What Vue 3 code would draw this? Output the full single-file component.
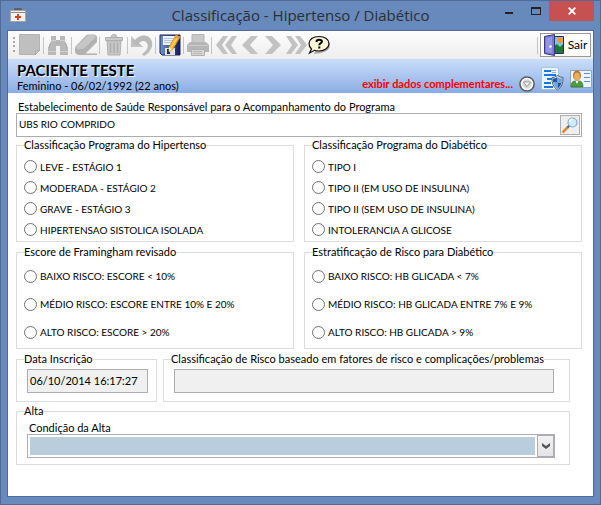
<script setup>
import { ref } from 'vue'

const groups = [
  {
    id: 'hipertenso',
    title: 'Classificação Programa do Hipertenso',
    options: ['LEVE - ESTÁGIO 1', 'MODERADA - ESTÁGIO 2', 'GRAVE - ESTÁGIO 3', 'HIPERTENSAO SISTOLICA ISOLADA'],
  },
  {
    id: 'diabetico',
    title: 'Classificação Programa do Diabético',
    options: ['TIPO I', 'TIPO II (EM USO DE INSULINA)', 'TIPO II (SEM USO DE INSULINA)', 'INTOLERANCIA A GLICOSE'],
  },
  {
    id: 'framingham',
    title: 'Escore de Framingham revisado',
    roomy: true,
    options: ['BAIXO RISCO: ESCORE < 10%', 'MÉDIO RISCO: ESCORE ENTRE 10% E 20%', 'ALTO RISCO: ESCORE > 20%'],
  },
  {
    id: 'estratificacao',
    title: 'Estratificação de Risco para Diabético',
    roomy: true,
    options: ['BAIXO RISCO: HB GLICADA < 7%', 'MÉDIO RISCO: HB GLICADA ENTRE 7% E 9%', 'ALTO RISCO: HB GLICADA > 9%'],
  },
]

const selected = ref({})
const estabelecimento = ref('UBS RIO COMPRIDO')
const dataInscricao = ref('06/10/2014 16:17:27')
const classificacaoRisco = ref('')
const condicaoAlta = ref('')
</script>

<template>
  <div class="window">
    <header class="titlebar">
      <svg class="app-icon" viewBox="0 0 16 14" width="16" height="14" aria-hidden="true">
        <path d="M5 3V1h6v2" fill="none" stroke="#555" stroke-width="1.4" />
        <rect x="0.5" y="2.5" width="15" height="11" fill="#f4f2ef" stroke="#a8a39d" />
        <path d="M1 4.5h14" stroke="#8d8b89" />
        <path d="M8 6v6M5 9h6" stroke="#d8431f" stroke-width="2" />
      </svg>
      <h1 class="title">Classificação - Hipertenso / Diabético</h1>
      <div class="controls">
        <button class="win-btn" type="button" aria-label="Minimizar">
          <svg viewBox="0 0 8 12" width="8" height="12"><path d="M0 7h8v2H0z" fill="#222" /></svg>
        </button>
        <button class="win-btn" type="button" aria-label="Maximizar">
          <svg viewBox="0 0 10 8" width="10" height="8"><path d="M0 0h10v8H0zM1 2v5h8V2z" fill="#222" fill-rule="evenodd" /></svg>
        </button>
        <button class="win-btn close" type="button" aria-label="Fechar">
          <svg viewBox="0 0 8 8" width="8" height="8"><path d="M0.7 0.7l6.6 6.6M7.3 0.7L0.7 7.3" stroke="#fff" stroke-width="1.8" /></svg>
        </button>
      </div>
    </header>

    <main class="client">
      <nav class="toolbar">
        <svg class="grip" viewBox="0 0 2 16" width="2" height="16" aria-hidden="true">
          <path d="M0 1h2M0 5h2M0 9h2M0 14h2" stroke="#a9a9a9" stroke-width="2" />
        </svg>
        <button class="tool" type="button" aria-label="Novo">
          <svg viewBox="0 0 22 22" width="22" height="22">
            <path d="M0.500 0.500h20v16l-4 4h-16z" fill="#bfbfbf" stroke="#b3b3b3" />
            <path d="M16.500 20.500v-3.500l4-.5z" fill="#d6d6d6" stroke="#aaa" />
          </svg>
        </button>
        <span class="sep"></span>
        <button class="tool" type="button" aria-label="Pesquisar">
          <svg viewBox="0 0 22 22" width="22" height="22">
            <path d="M4 2h5v4h4V2h5v5l3 7v7h-8v-9h-4v9H1v-7l3-7z" fill="#b9b9b9" />
            <path d="M4 6.500h5M13 6.500h5M1 17.500h8M13 17.500h8" stroke="#cfcfcf" />
            <path d="M3.500 9L2 14M18.500 9l1.500 5M9 9h4" stroke="#a6a6a6" />
          </svg>
        </button>
        <span class="sep"></span>
        <button class="tool" type="button" aria-label="Limpar">
          <svg viewBox="0 0 22 22" width="22" height="22">
            <path d="M0 14q0-1 1-2L11 1.500q1-1 3-1h5q3 .5 3 3V8L10.500 19.500H22V21H4q-4-.5-4-4z" fill="#b1b1b1" />
            <path d="M1 13L12 2q1-1 3-1h4q3 1 1 3L9.500 14q-1 1-3 1H3q-2 0-2-2z" fill="#c6c6c6" />
          </svg>
        </button>
        <span class="sep"></span>
        <button class="tool" type="button" aria-label="Excluir">
          <svg viewBox="0 0 22 22" width="22" height="22">
            <path d="M2.500 3.500h17v3h-17zM8 3.500q0-3 3-3t3 3" fill="#cbcbcb" stroke="#b0b0b0" />
            <path d="M4 7h14l-1 14H5z" fill="#c8c8c8" stroke="#b0b0b0" />
            <path d="M7.500 9v10M11 9v10M14.500 9v10" stroke="#adadad" stroke-width="1.500" />
          </svg>
        </button>
        <span class="sep"></span>
        <button class="tool" type="button" aria-label="Desfazer">
          <svg viewBox="0 0 22 22" width="22" height="22">
            <path d="M0 2l4 4c4-5 11-6 15-2 5 6 1 14-6 18l-2-2c5-3 8-8 4-12-2-2-5-1-7 1l4 4H0z" fill="#bababa" />
            <path d="M1 3v9h10" fill="none" stroke="#cdcdcd" />
          </svg>
        </button>
        <span class="sep"></span>
        <button class="tool" type="button" aria-label="Salvar">
          <svg viewBox="0 0 22 22" width="22" height="22">
            <defs>
              <linearGradient id="disk" x1="0" x2="1"><stop offset="0" stop-color="#6f94cf" /><stop offset="1" stop-color="#141b57" /></linearGradient>
            </defs>
            <path d="M1 1h20v20H3l-2-2z" fill="url(#disk)" stroke="#1a2458" />
            <path d="M4 2h13v9H4z" fill="#eef3fb" />
            <path d="M5 4.500h11M5 6.500h11M5 8.500h11" stroke="#b6c5dd" />
            <path d="M6 14h10v7H6z" fill="#dfe4ea" />
            <path d="M8 15h3v5H8z" fill="#1b2868" />
            <path d="M17 1l4 2-7 12-4 3 0-5z" fill="#f6b92c" stroke="#d88413" stroke-width="0.700" />
            <path d="M17 1l4 2-1.500 2.500-3.500-2z" fill="#ef9848" />
            <path d="M10 13l3 2-3 3z" fill="#f4ead0" />
            <path d="M18 4.500l-6 9" stroke="#ffe47a" />
          </svg>
        </button>
        <span class="sep"></span>
        <button class="tool" type="button" aria-label="Imprimir">
          <svg viewBox="0 0 22 22" width="22" height="22">
            <path d="M5 0.500h12v8H5z" fill="#c9c9c9" stroke="#b5b5b5" />
            <path d="M3 8h16l3 3v7H0v-7z" fill="#b6b6b6" />
            <path d="M1 11.500h20" stroke="#cbcbcb" />
            <path d="M4.500 15.500h13v6h-13z" fill="#d6d6d6" stroke="#b0b0b0" />
            <path d="M6 17.500h9M6 19.500h9" stroke="#b8b8b8" />
          </svg>
        </button>
        <span class="sep"></span>
        <div class="pager">
          <button class="tool narrow" type="button" aria-label="Primeiro">
            <svg viewBox="0 0 22 18" width="22" height="18"><path d="M7 0h5L6 9l6 9H7L0 9zM16 0h5l-6 9 6 9h-5L9 9z" fill="#c2c2c2" /></svg>
          </button>
          <button class="tool narrow" type="button" aria-label="Anterior">
            <svg viewBox="0 0 16 18" width="16" height="18"><path d="M9 0h7L8 9l8 9H9L0 9z" fill="#c2c2c2" /></svg>
          </button>
          <button class="tool narrow" type="button" aria-label="Próximo">
            <svg viewBox="0 0 16 18" width="16" height="18"><path d="M0 0h7l9 9-9 9H0l8-9z" fill="#c2c2c2" /></svg>
          </button>
          <button class="tool narrow" type="button" aria-label="Último">
            <svg viewBox="0 0 22 18" width="22" height="18"><path d="M1 0h5l7 9-7 9H1l6-9zM10 0h5l7 9-7 9h-5l6-9z" fill="#c2c2c2" /></svg>
          </button>
          <button class="tool narrow" type="button" aria-label="Ajuda">
            <svg viewBox="0 0 22 20" width="22" height="20">
              <path d="M13 3q9 1 9 7t-9 8l-7 1z" fill="#aaa" />
              <path d="M11 1.500c6 0 10 3 10 7S17 16 11 16c-1.500 0-3 0-4.500-.7L1.500 18l2-4C2 12.500 1 10.500 1 8.500c0-4 4-7 10-7z" fill="#fff6d3" stroke="#111" stroke-width="1.200" />
              <path d="M8.500 7q0-2.300 2.700-2.300T13.900 6.500q0 1.100-1.500 1.800-1.100.6-1.100 1.900M11.300 11.500v2" fill="none" stroke="#000" stroke-width="2" />
            </svg>
          </button>
        </div>
        <span class="sep push"></span>
        <button class="exit" type="button">
          <svg viewBox="0 0 20 22" width="20" height="22" aria-hidden="true">
            <path d="M9.500 2.500h10v17h-10z" fill="#7cc4f4" stroke="#2a2a66" />
            <circle cx="16" cy="6" r="3" fill="#f59a1c" />
            <path d="M10 12l3-2 3 3 3-3v9h-9z" fill="#1e7a2a" />
            <path d="M0.500 2.500L10.500 0.500v21L0.500 19.500z" fill="#7b7ad2" stroke="#38367e" />
            <path d="M2 4l6-1.500V19l-6-1z" fill="#9594e2" />
            <circle cx="6.500" cy="12.500" r="1.300" fill="#fff" />
          </svg>
          Sair
        </button>
      </nav>

      <section class="patient">
        <div class="who">
          <h2>PACIENTE TESTE</h2>
          <p>Feminino - 06/02/1992 (22 anos)</p>
        </div>
        <a class="more" href="#">exibir dados complementares...</a>
        <button class="plain expand" type="button" aria-label="Expandir">
          <svg viewBox="0 0 16 16" width="16" height="16">
            <circle cx="8" cy="8" r="7" fill="#d8d8d8" stroke="#555" stroke-width="1.600" />
            <circle cx="8" cy="8" r="5.500" fill="none" stroke="#fff" stroke-width="1.500" />
            <path d="M4.500 6h7L8 10.500z" fill="#fff" stroke="#888" stroke-width="0.800" />
          </svg>
        </button>
        <button class="plain" type="button" aria-label="Documento protegido">
          <svg viewBox="0 0 23 24" width="23" height="24">
            <path d="M0.500 0.500h17v22H0.500z" fill="#e9f3fd" stroke="#a9c3e4" />
            <path d="M3 3h7v2H3zM3 7h12v2H3zM6 11h5v2H6zM3 15h7v2H3zM3 19h9v2H3z" fill="#1d74dc" />
            <path d="M10 3.500h5M11 5.500h4" stroke="#7fb2ee" />
            <path d="M16.500 8.500q3 2 5.500 2 .5 8.500-5.500 12.500-6-4-5.500-12.500 2.500 0 5.500-2z" fill="#dfe8f0" stroke="#4f6275" />
            <path d="M16.500 10v5.500h-4.200q-.4-2-.3-4 2.500 0 4.500-1.500zM16.500 15.500h4.200q-1 4-4.200 6.500z" fill="#1659ad" />
            <path d="M16.500 10v5.500h4.200q.4-2 .3-4-2.500 0-4.500-1.500zM16.500 15.500h-4.200q1 4 4.200 6.500z" fill="#6ea4e2" />
          </svg>
        </button>
        <button class="plain" type="button" aria-label="Cartão do paciente">
          <svg viewBox="0 0 22 20" width="22" height="20">
            <path d="M0.500 1.500h21v17H0.500z" fill="#eef5fd" stroke="#8da3c2" />
            <path d="M14 4.500h6M14 8.500h6M14 12.500h6" stroke="#5f8fd0" />
            <path d="M1 18q0-6 4-6h4q4 0 4 6z" fill="#4c9b3d" stroke="#2f7328" stroke-width="0.700" />
            <path d="M5.500 12h3L7 15z" fill="#fff" />
            <ellipse cx="7" cy="6.500" rx="4" ry="5" fill="#b3742a" />
            <ellipse cx="7" cy="7.500" rx="3" ry="4" fill="#e9ac62" />
          </svg>
        </button>
      </section>

      <form class="form" @submit.prevent>
        <label class="caption" for="estabelecimento">Estabelecimento de Saúde Responsável para o Acompanhamento do Programa</label>
        <div class="lookup">
          <input id="estabelecimento" v-model="estabelecimento" type="text" />
          <button class="search" type="button" aria-label="Procurar">
            <svg viewBox="0 0 18 18" width="18" height="18">
              <path d="M1.500 16.500L7 11" stroke="#e2892b" stroke-width="2.500" />
              <path d="M6.500 11.500l2-2" stroke="#55606b" stroke-width="2" />
              <circle cx="11.500" cy="6.500" r="4.500" fill="#c9ebfb" stroke="#86a6c4" stroke-width="1.200" />
              <path d="M8.500 6q.5-2.500 3-3" fill="none" stroke="#fff" stroke-width="1.500" />
            </svg>
          </button>
        </div>

        <div class="groups">
          <fieldset v-for="g in groups" :key="g.id" class="group">
            <legend>{{ g.title }}</legend>
            <div class="options" :class="{ roomy: g.roomy }">
              <label v-for="o in g.options" :key="o" class="option">
                <input v-model="selected[g.id]" type="radio" :name="g.id" :value="o" />
                <span>{{ o }}</span>
              </label>
            </div>
          </fieldset>
        </div>

        <div class="details">
          <fieldset class="group">
            <legend><label for="data">Data Inscrição</label></legend>
            <div class="body short"><input id="data" v-model="dataInscricao" class="field" type="text" readonly /></div>
          </fieldset>
          <fieldset class="group">
            <legend><label for="risco">Classificação de Risco baseado em fatores de risco e complicações/problemas</label></legend>
            <div class="body"><input id="risco" v-model="classificacaoRisco" class="field" type="text" readonly /></div>
          </fieldset>
          <fieldset class="group wide">
            <legend>Alta</legend>
            <div class="body alta">
              <label class="sub" for="alta">Condição da Alta</label>
              <div class="combo">
                <select id="alta" v-model="condicaoAlta"><option value=""></option></select>
                <span class="arrow" aria-hidden="true">
                  <svg viewBox="0 0 8 6" width="8" height="6"><path d="M0 0l4 3 4-3v3L4 6 0 3z" fill="#555" /></svg>
                </span>
              </div>
            </div>
          </fieldset>
        </div>
      </form>
    </main>
  </div>
</template>

<style>
body {
  margin: 0;
}
</style>

<style scoped>
* {
  box-sizing: border-box;
}

.window {
  display: flex;
  flex-direction: column;
  min-height: 100vh;
  padding: 0 6px 7px;
  border: 1px solid #4f6b96;
  background: #6789bb;
  color: #000;
  font: 11px/14px Lato, "Liberation Sans", sans-serif;
}

input,
select,
button {
  margin: 0;
  font: inherit;
  color: inherit;
}

button {
  display: flex;
  align-items: center;
  justify-content: center;
  padding: 0;
  border: 0;
  background: none;
}

svg {
  display: block;
  flex: none;
}

.titlebar {
  display: grid;
  grid-template-columns: 1fr auto 1fr;
  height: 29px;
}

.app-icon {
  margin: 7px 0 0 3px;
}

.title {
  margin: 0;
  font: 400 15px/29px "Open Sans", sans-serif;
  color: #2b2f36;
}

.controls {
  display: flex;
  justify-content: flex-end;
  height: 20px;
}

.win-btn {
  width: 27px;
}

.win-btn.close {
  width: 45px;
  background: #c75050;
}

.client {
  flex: 1;
  border: 1px solid #4d6c9c;
  background: #fff;
}

.toolbar {
  display: flex;
  align-items: center;
  height: 28px;
  padding: 0 2px 0 5px;
  background: linear-gradient(#fdfdfd, #eee);
}

.grip {
  margin-right: 1px;
}

.tool {
  width: 27px;
  height: 24px;
}

.narrow {
  width: 23px;
}

.pager {
  display: flex;
  margin-left: 3px;
}

.sep {
  width: 1px;
  height: 17px;
  background: #c4c4c4;
}

.push {
  margin: 0 2px 0 auto;
}

.exit {
  gap: 4px;
  width: 51px;
  height: 24px;
  border: 1px solid #999;
  background: #fcfcfc;
  font-size: 12px;
}

.patient {
  display: flex;
  align-items: center;
  gap: 6px;
  height: 34px;
  padding: 0 1px 0 9px;
  background: linear-gradient(#cadefa, #8bade4);
}

.who {
  flex: 1;
  padding-top: 2px;
}

.who h2 {
  margin: 0;
  font-size: 15px;
  font-weight: 700;
  line-height: 18px;
  text-shadow: 1px 1px 0 #f4f4f4;
}

.who p {
  margin: 0;
}

.more {
  padding-top: 16px;
  color: #f00;
  font-weight: 700;
  text-decoration: none;
}

.plain {
  padding-top: 6px;
}

.expand {
  padding-top: 16px;
}

.form {
  padding: 7px 11px 31px 8px;
}

.caption {
  display: block;
  padding-left: 2px;
  line-height: 13px;
}

.lookup {
  display: flex;
  height: 24px;
  padding: 1px;
  border: 1px solid #abadb3;
}

.lookup input {
  flex: 1;
  min-width: 0;
  padding: 0 1px 2px;
  border: 0;
  outline: 0;
  background: transparent;
  font-size: 10px;
}

.search {
  width: 20px;
  border: 1px solid #adadad;
  background: #eee;
}

.groups {
  display: grid;
  grid-template-columns: 1fr 1fr;
  gap: 3px 10px;
  margin-top: 1px;
}

.group {
  min-width: 0;
  margin: 0;
  padding: 0;
  border: 1px solid #dcdcdc;
}

legend {
  margin-left: 7px;
  padding: 0;
  white-space: nowrap;
}

.options {
  padding: 4px 7px 1px;
}

.option {
  display: flex;
  align-items: center;
  gap: 3px;
  height: 21px;
  font-size: 10px;
}

.roomy {
  padding: 3px 7px 2px;
}

.roomy .option {
  height: 28px;
}

.option input {
  flex: none;
  width: 13px;
  height: 13px;
  border: 1px solid #6f6f6f;
  border-radius: 50%;
  background: #fff;
  appearance: none;
}

.option input:checked {
  background: radial-gradient(#222 3px, #fff 4px);
}

.details {
  display: grid;
  grid-template-columns: 141px 1fr;
  gap: 2px 6px;
  margin: 3px 12px 0 0;
}

.wide {
  grid-column: 1 / -1;
}

.body {
  padding: 3px 15px 8px 10px;
}

.short {
  padding-right: 8px;
}

.field {
  display: block;
  width: 100%;
  height: 24px;
  padding: 0 2px 2px;
  border: 1px solid #abadb3;
  border-radius: 0;
  outline: 0;
  background: #f0f0f0;
}

.alta {
  padding: 4px 14px 6px 10px;
}

.sub {
  display: block;
  padding-left: 2px;
  line-height: 12px;
}

.combo {
  display: grid;
  grid-template-columns: 1fr 17px;
  height: 24px;
  border: 1px solid #abadb3;
}

.combo select {
  grid-area: 1 / 1 / 2 / 3;
  margin: 2px 19px 2px 2px;
  border: 0;
  border-radius: 0;
  outline: 0;
  background: #b9cddd;
  appearance: none;
}

.arrow {
  display: flex;
  grid-area: 1 / 2;
  align-items: center;
  justify-content: center;
  border: 1px solid #abadb3;
  background: linear-gradient(#f2f2f2, #e4e4e4);
  pointer-events: none;
}
</style>
